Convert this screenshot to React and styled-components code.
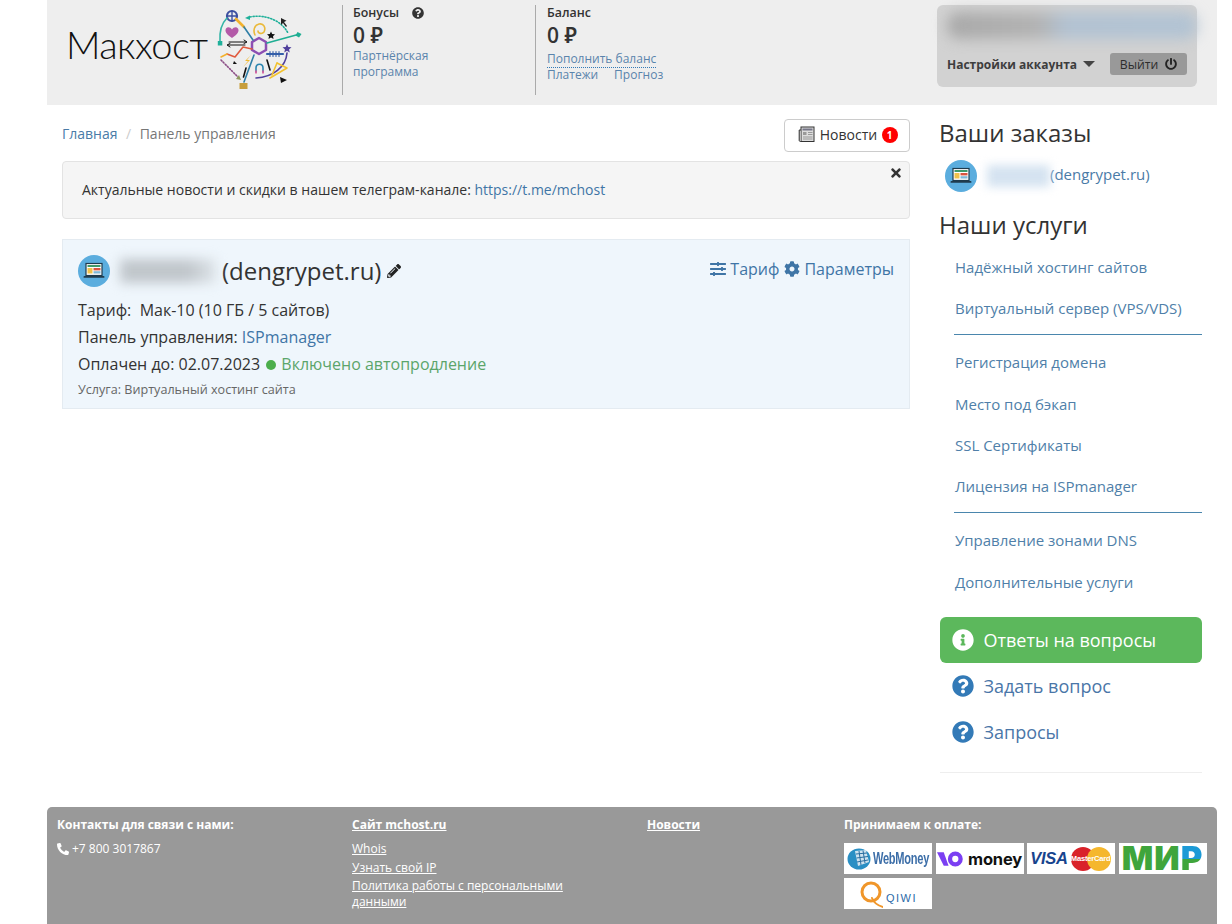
import React from "react";
import styled, { createGlobalStyle } from "styled-components";
import { FaSlidersH, FaCog, FaPencilAlt, FaTimes, FaInfoCircle, FaQuestionCircle, FaPhoneAlt, FaPowerOff } from "react-icons/fa";

const Global = createGlobalStyle`
  html, body { margin: 0; padding: 0; background: #fff; }
  body { font-family: "Open Sans", "Noto Sans", sans-serif; font-size: 14px; color: #333; }
  a { text-decoration: none; color: inherit; }
`;

const Page = styled.div`
  width: 1170px;
  margin-left: 47px;
  height: 924px;
  display: flex;
  flex-direction: column;
  overflow: hidden;
`;

const Header = styled.header`
  height: 105px;
  flex: none;
  background: #eee;
  display: flex;
`;

const LogoBlock = styled.div`
  width: 295px;
  flex: none;
  display: flex;
  align-items: flex-start;
  padding-left: 19px;
  box-sizing: border-box;
`;

const LogoText = styled.div`
  font-family: "Lato", sans-serif;
  font-weight: 300;
  font-size: 38px;
  line-height: 46px;
  margin-top: 21px;
  width: 144px;
  color: #111;
  letter-spacing: -0.6px;
`;

const LogoMark = styled.svg`
  width: 100px;
  height: 90px;
  margin-top: 5px;
  flex: none;
`;

const Stat = styled.div`
  width: ${(p) => p.$w}px;
  flex: none;
  box-sizing: border-box;
  height: 90px;
  margin-top: 5px;
  border-left: 1px solid #aaa;
  padding-left: ${(p) => p.$pad}px;
`;

const StatTitle = styled.div`
  font-size: 12.4px;
  font-weight: 600;
  line-height: 16px;
  color: #333;
  display: flex;
  align-items: center;
  gap: 13px;
`;

const StatValue = styled.div`
  font-size: 21px;
  font-weight: 600;
  line-height: 26px;
  margin-top: 1px;
  color: #333;
`;

const StatLink = styled.a`
  display: block;
  font-size: 12px;
  line-height: 15.5px;
  color: #5a84ac;
  width: ${(p) => p.$w || "auto"};
`;

const DottedLink = styled(StatLink)`
  display: inline-block;
  border-bottom: 1px dotted #337ab7;
  line-height: 14.5px;
  margin-top: 1px;
`;

const StatLinks = styled.div`
  display: flex;
  gap: 16px;
  margin-top: -1px;
`;

const Account = styled.div`
  margin-left: auto;
  margin-right: 20px;
  margin-top: 5px;
  width: 260px;
  height: 82px;
  background: #d2d2d2;
  border-radius: 6px;
  box-sizing: border-box;
  padding: 7px 10px 0;
`;

const BlurBar = styled.div`
  height: 27px;
  width: 250px;
  border-radius: 12px;
  background: linear-gradient(90deg, #a9a9a9 0, #b2b2b2 36%, #b2c2d2 48%, #b2c3d3 100%);
  filter: blur(7px);
`;

const AccountRow = styled.div`
  display: flex;
  align-items: center;
  margin-top: 14px;
`;

const AccountSettings = styled.div`
  font-size: 12px;
  font-weight: 700;
  color: #3d3d3d;
  display: flex;
  align-items: center;
  gap: 6px;
`;

const Caret = styled.span`
  width: 0;
  height: 0;
  border-left: 6px solid transparent;
  border-right: 6px solid transparent;
  border-top: 6px solid #444;
`;

const Logout = styled.a`
  margin-left: auto;
  width: 77px;
  height: 22px;
  background: #999;
  border-radius: 3px;
  font-size: 12.2px;
  color: #2d2d2d;
  display: flex;
  align-items: center;
  justify-content: center;
  gap: 7px;
`;

const Content = styled.div`
  flex: 1;
  display: grid;
  grid-template-columns: 848px 262px;
  column-gap: 30px;
  padding: 0 15px;
  align-content: start;
`;

const Main = styled.main`
  min-width: 0;
`;

const TopRow = styled.div`
  display: flex;
  align-items: center;
  justify-content: space-between;
  height: 33px;
  margin-top: 14px;
`;

const Crumbs = styled.div`
  font-size: 14px;
  color: #777;
  display: flex;
  gap: 8.5px;
  margin-top: -4px;
`;

const CrumbLink = styled.a`
  color: #4a7ba7;
`;

const Sep = styled.span`
  color: #ccc;
`;

const NewsBtn = styled.a`
  width: 126px;
  height: 33px;
  box-sizing: border-box;
  border: 1px solid #ccc;
  border-radius: 4px;
  display: flex;
  align-items: center;
  justify-content: center;
  gap: 4.5px;
  padding: 0 0 2px 2px;
  font-size: 14px;
  color: #333;
  background: #fff;
`;

const Badge = styled.span`
  width: 16px;
  height: 16px;
  border-radius: 50%;
  background: #f00;
  color: #fff;
  font-size: 10px;
  font-weight: 700;
  display: inline-flex;
  align-items: center;
  justify-content: center;
`;

const Notice = styled.div`
  position: relative;
  margin-top: 9px;
  height: 58px;
  box-sizing: border-box;
  background: #f5f5f5;
  border: 1px solid #e3e3e3;
  border-radius: 4px;
  padding: 18px 19px 0;
  line-height: 19px;
  font-size: 14px;
`;

const Close = styled.span`
  position: absolute;
  right: 6px;
  top: 4px;
  color: #333;
  font-size: 14px;
  line-height: 14px;
  display: flex;
`;

const Link = styled.a`
  color: #3f75a6;
`;

const Card = styled.section`
  margin-top: 20px;
  height: 170px;
  box-sizing: border-box;
  background: #eff6fc;
  border: 1px solid #e4ebf1;
  padding: 15px 15px 0;
`;

const CardHead = styled.div`
  display: flex;
  align-items: center;
  height: 32px;
  margin-bottom: 10px;
`;

const SiteBadge = styled.svg`
  width: 32px;
  height: 32px;
  flex: none;
`;

const CardBlur = styled.div`
  width: 96px;
  height: 24px;
  margin-left: 10px;
  background: linear-gradient(90deg, #c0c6cb 0, #c0c6cb 70%, #dde3e8 100%);
  filter: blur(6px);
  flex: none;
`;

const CardTitle = styled.div`
  font-size: 24px;
  line-height: 32px;
  color: #333;
  margin-left: 6px;
`;

const Pencil = styled.span`
  font-size: 14px;
  margin-left: 6px;
  display: flex;
  color: #222;
`;

const CardActions = styled.div`
  margin-left: auto;
  display: flex;
  align-items: center;
  font-size: 16px;
  color: #3f75a6;
  gap: 5px;
  margin-top: -5px;
`;

const ActionLink = styled.a`
  display: flex;
  align-items: center;
  gap: 4px;
`;

const CardLine = styled.div`
  font-size: 16px;
  line-height: 27px;
  color: #333;
`;

const Green = styled.span`
  color: #5ba56a;
`;

const Dot = styled.span`
  display: inline-block;
  width: 10px;
  height: 10px;
  border-radius: 50%;
  background: #4cae4c;
  margin: 0 5px 0 2px;
`;

const CardNote = styled.div`
  font-size: 12.6px;
  line-height: 16px;
  margin-top: 4px;
  color: #666;
`;

const Side = styled.aside`
  min-width: 0;
`;

const SideTitle = styled.h2`
  margin: 0 0 0 -1px;
  font-size: 24px;
  font-weight: 400;
  line-height: 32px;
  color: #333;
  margin-top: ${(p) => p.$top}px;
`;

const OrderRow = styled.div`
  display: flex;
  align-items: center;
  padding-left: 5px;
  height: 32px;
  margin-top: 11px;
`;

const OrderBlur = styled.div`
  width: 63px;
  height: 22px;
  margin-left: 10px;
  background: #d5e3f1;
  filter: blur(5px);
  flex: none;
`;

const OrderName = styled.a`
  font-size: 15px;
  color: #4a7ba7;
  margin-top: -4px;
`;

const Services = styled.nav`
  margin-top: 5px;
`;

const ServiceLink = styled.a`
  display: flex;
  align-items: center;
  height: 41.3px;
  padding-left: 15px;
  font-size: 15px;
  color: #4f7fa9;
`;

const ServiceRule = styled.div`
  height: 1px;
  background: #4a86ad;
  margin: 5px 0 7px 14px;
`;

const Help = styled.a`
  display: flex;
  align-items: center;
  height: 46px;
  box-sizing: border-box;
  padding-left: 12px;
  gap: 9.5px;
  font-size: 18px;
  border-radius: 6px;
  color: ${(p) => (p.$active ? "#fff" : "#4a76a8")};
  background: ${(p) => (p.$active ? "#5cb85c" : "transparent")};
  svg { color: ${(p) => (p.$active ? "#fff" : "#337ab7")}; font-size: 22px; flex: none; }
`;

const HelpList = styled.div`
  margin-top: 15px;
`;

const SideRule = styled.div`
  height: 1px;
  background: #eee;
  margin-top: 17px;
`;

const Footer = styled.footer`
  margin-top: auto;
  height: 117px;
  flex: none;
  background: #999;
  border-radius: 5px 5px 0 0;
  color: #fff;
  display: grid;
  grid-template-columns: 295px 295px 197px 1fr;
  padding: 10px 0 0 10px;
  box-sizing: border-box;
  font-size: 12px;
`;

const FootTitle = styled.div`
  font-weight: 700;
  font-size: 12px;
  line-height: 16px;
  margin-bottom: ${(p) => (p.$wide ? 10 : 8)}px;
  text-decoration: ${(p) => (p.$u ? "underline" : "none")};
`;

const FootText = styled.div`
  display: flex;
  align-items: center;
  gap: 3px;
  line-height: 16px;
  font-size: 12px;
`;

const FootLink = styled.a`
  display: block;
  color: #fff;
  text-decoration: underline;
  line-height: 16px;
  font-size: 12px;
  width: 240px;
  margin-top: ${(p) => (p.$tight ? -1 : 0)}px;
  margin-bottom: 3px;
`;

const Pays = styled.div`
  display: flex;
  flex-wrap: wrap;
  gap: 4px 3.5px;
  width: 370px;
`;

const Pay = styled.div`
  width: 88px;
  height: 31px;
  background: #fff;
  display: flex;
  align-items: center;
  justify-content: center;
  gap: ${(p) => p.$gap || 2}px;
`;

const WmText = styled.span`
  font-family: "Liberation Sans", sans-serif;
  font-weight: 700;
  font-size: 17px;
  color: #3c6ea8;
  letter-spacing: -0.4px;
  transform: scaleX(0.65);
  transform-origin: left center;
  width: 57px;
  white-space: nowrap;
`;

const YooText = styled.span`
  font-family: "Inter", sans-serif;
  font-weight: 700;
  font-size: 16.5px;
  color: #111;
  letter-spacing: -0.2px;
`;

const VisaText = styled.span`
  font-family: "Liberation Sans", sans-serif;
  font-style: italic;
  font-weight: 700;
  font-size: 16.5px;
  color: #17448e;
  letter-spacing: -0.3px;
`;

const McWrap = styled.div`
  position: relative;
  width: 42px;
  height: 24px;
  flex: none;
`;

const McText = styled.span`
  position: absolute;
  left: 0;
  right: 0;
  top: 6px;
  text-align: center;
  font-family: "Liberation Sans", sans-serif;
  font-weight: 700;
  font-size: 7.6px;
  line-height: 12px;
  letter-spacing: -0.2px;
  color: #fff;
  white-space: nowrap;
`;

const MirText = styled.span`
  font-family: "Inter", sans-serif;
  font-weight: 900;
  font-size: 33px;
  line-height: 31px;
  letter-spacing: 1px;
  color: #3fa53c;
  white-space: nowrap;
  span { background: linear-gradient(180deg, #1c9ad6 0 52%, #3fa53c 52%); -webkit-background-clip: text; background-clip: text; -webkit-text-fill-color: transparent; }
`;

const QiwiText = styled.span`
  font-family: "Liberation Sans", sans-serif;
  font-size: 11px;
  letter-spacing: 1.5px;
  color: #2c6aa8;
  margin-top: 8px;
`;

function Site() {
  return (
    <SiteBadge viewBox="0 0 32 32">
      <circle cx="16" cy="16" r="16" fill="#5badde" />
      <rect x="8" y="8.5" width="16" height="12" fill="#fff" stroke="#1f3b4d" strokeWidth="1.2" />
      <rect x="9.5" y="10" width="13" height="2" fill="#3f9a6b" />
      <rect x="9.5" y="13" width="5" height="5.5" fill="#f0c14b" />
      <rect x="15.5" y="13" width="7" height="2.4" fill="#d9543f" />
      <rect x="15.5" y="16.2" width="7" height="2.3" fill="#7fb8d8" />
      <rect x="5.5" y="21" width="21" height="1.8" rx=".9" fill="#1f3b4d" />
    </SiteBadge>
  );
}

function Logo() {
  return (
    <LogoMark viewBox="0 0 100 90" fill="none" strokeLinecap="round" strokeLinejoin="round">
      <path d="M49 33 56 37V45L49 49 42 45V37Z" stroke="#8d4fb3" strokeWidth="2.5" />
      <circle cx="22" cy="11" r="5" stroke="#3c4fa0" strokeWidth="2.2" />
      <path d="M22 6v10M17 11h10" stroke="#3c4fa0" strokeWidth="1.4" />
      <path d="M17 13C11 19 9.500 28 10 36" stroke="#33b4a6" strokeWidth="1.600" />
      <rect x="7.800" y="36" width="4.500" height="4.500" fill="#1fb09a" />
      <path d="M26 14 34 22" stroke="#f3b12d" strokeWidth="2.600" />
      <path d="M34 22 43 35" stroke="#2f7ea6" strokeWidth="1.600" />
      <path d="M45 30C43 26 44 20 49 19 54 18 56 23 54 27 52 29.500 48 28.500 48 26" stroke="#eab93a" strokeWidth="1.600" />
      <path d="M61 26.500 62.200 29 65 29.300 63 31.200 63.500 34 61 32.600 58.500 34 59 31.200 57 29.300 59.800 29Z" fill="#111" />
      <path d="M40 12C55 9 71 15 78 28" stroke="#1fb09a" strokeWidth="1.600" strokeDasharray="1.200 1.800" />
      <path d="M35 13 40 10.500V15Z" fill="#1fb09a" />
      <path d="M71 13 76.500 15.800 74 17 77 21 76 22 73 18 71 20Z" fill="#222" />
      <path d="M57 38 88 29.500" stroke="#1fae93" strokeWidth="1.600" />
      <path d="M87.500 27 91.500 29 89 32.500 85.500 30.500Z" fill="#1fae93" />
      <path d="M77 39 78.300 42 81.500 42.300 79 44.400 79.800 47.500 77 45.800 74.200 47.500 75 44.400 72.500 42.300 75.700 42Z" fill="#503f9c" />
      <path d="M77 48C76 62 63 72 46 73" stroke="#503f9c" strokeWidth="1.600" />
      <path d="M22 33C16 29 14.500 26 16 23.500 17.500 21.500 20.500 22 22 24.500 23.500 22 26.500 21.500 28 23.500 29.500 26 28 29 22 33Z" fill="#b35aa8" />
      <path d="M19 37H36M18 40H35" stroke="#111" strokeWidth="1" />
      <path d="M34 35 37 37 34 38.500M20 38.500 17 40 20 42" stroke="#111" strokeWidth="1" />
      <path d="M42 44 33 42 25 52 17 49" stroke="#e05a3e" strokeWidth="1.600" />
      <path d="M17 49 11 52" stroke="#f3b12d" strokeWidth="1.600" />
      <path d="M11 55 28 72" stroke="#8b4d86" strokeWidth="1.600" strokeDasharray="1.200 1.800" />
      <path d="M29 70 31 75 26 74Z" fill="#8f9a5d" />
      <path d="M24 56 27 59 23 59Z" fill="#111" />
      <path d="M41 50 35 56 38 56 33 62 40 55 37 55Z" fill="#f2b92d" />
      <path d="M36 63 33.500 72" stroke="#111" strokeWidth="1.600" />
      <path d="M44 50 34 77" stroke="#2f7ea6" strokeWidth="1.600" />
      <rect x="29.500" y="78" width="8" height="6" fill="#c79d3b" />
      <path d="M46 67V63C46 58 53 58 53 63V67" stroke="#2d86b0" strokeWidth="1.600" />
      <path d="M46 68v-2M53 68v-2" stroke="#e0559a" strokeWidth="1.600" />
      <path d="M57 55 60 65" stroke="#111" strokeWidth="1.600" />
      <path d="M57 49H73" stroke="#345ea8" strokeWidth="2.200" />
      <path d="M60 46.500V51.500M63 46.500V51.500M66 46.500V51.500M69 46.500V51.500" stroke="#345ea8" strokeWidth="1.100" />
      <path d="M67 58 77 63 60 73" stroke="#f3c22f" strokeWidth="1.600" />
      <path d="M67 58 62 70" stroke="#f3c22f" strokeWidth="1.600" />
      <path d="M70 72 77 75 71 78Z" fill="#111" />
    </LogoMark>
  );
}

function NewsIcon() {
  return (
    <svg width="17" height="17" viewBox="0 0 17 17" fill="none">
      <rect x="3" y="1" width="13" height="14.500" fill="#ddd" stroke="#333" />
      <path d="M3 4H1.200V14.500C1.200 15.300 2 15.500 3 15.500" fill="#bbb" stroke="#333" />
      <rect x="4.500" y="2.500" width="10" height="2" fill="#778" />
      <rect x="5" y="6" width="3.500" height="3" fill="#999" />
      <path d="M10 6.500H14.500M10 8.500H14.500M5 11H14.500M5 13H14.500" stroke="#999" />
    </svg>
  );
}

const services1 = ["Надёжный хостинг сайтов", "Виртуальный сервер (VPS/VDS)"];
const services2 = ["Регистрация домена", "Место под бэкап", "SSL Сертификаты", "Лицензия на ISPmanager"];
const services3 = ["Управление зонами DNS", "Дополнительные услуги"];

export default function App() {
  return (
    <>
      <Global />
      <Page>
        <Header>
          <LogoBlock>
            <LogoText>Макхост</LogoText>
            <Logo />
          </LogoBlock>
          <Stat $w={193} $pad={10}>
            <StatTitle>
              Бонусы
              <FaQuestionCircle size={12} color="#333" />
            </StatTitle>
            <StatValue>0 ₽</StatValue>
            <StatLink $w="90px">Партнёрская программа</StatLink>
          </Stat>
          <Stat $w={150} $pad={11}>
            <StatTitle>Баланс</StatTitle>
            <StatValue>0 ₽</StatValue>
            <DottedLink>Пополнить баланс</DottedLink>
            <StatLinks>
              <StatLink>Платежи</StatLink>
              <StatLink>Прогноз</StatLink>
            </StatLinks>
          </Stat>
          <Account>
            <BlurBar />
            <AccountRow>
              <AccountSettings>
                Настройки аккаунта
                <Caret />
              </AccountSettings>
              <Logout>
                Выйти
                <FaPowerOff size={12} color="#222" />
              </Logout>
            </AccountRow>
          </Account>
        </Header>

        <Content>
          <Main>
            <TopRow>
              <Crumbs>
                <CrumbLink>Главная</CrumbLink>
                <Sep>/</Sep>
                <span>Панель управления</span>
              </Crumbs>
              <NewsBtn>
                <NewsIcon />
                Новости
                <Badge>1</Badge>
              </NewsBtn>
            </TopRow>
            <Notice>
              Актуальные новости и скидки в нашем телеграм-канале: <Link>https://t.me/mchost</Link>
              <Close>
                <FaTimes />
              </Close>
            </Notice>
            <Card>
              <CardHead>
                <Site />
                <CardBlur />
                <CardTitle>(dengrypet.ru)</CardTitle>
                <Pencil>
                  <FaPencilAlt />
                </Pencil>
                <CardActions>
                  <ActionLink>
                    <FaSlidersH />
                    Тариф
                  </ActionLink>
                  <ActionLink>
                    <FaCog />
                    Параметры
                  </ActionLink>
                </CardActions>
              </CardHead>
              <CardLine>Тариф:&nbsp; Мак-10 (10 ГБ / 5 сайтов)</CardLine>
              <CardLine>
                Панель управления: <Link>ISPmanager</Link>
              </CardLine>
              <CardLine>
                Оплачен до: 02.07.2023 <Dot />
                <Green>Включено автопродление</Green>
              </CardLine>
              <CardNote>Услуга: Виртуальный хостинг сайта</CardNote>
            </Card>
          </Main>
          <Side>
            <SideTitle $top={12}>Ваши заказы</SideTitle>
            <OrderRow>
              <Site />
              <OrderBlur />
              <OrderName>(dengrypet.ru)</OrderName>
            </OrderRow>
            <SideTitle $top={17}>Наши услуги</SideTitle>
            <Services>
              {services1.map((s) => (
                <ServiceLink key={s}>{s}</ServiceLink>
              ))}
              <ServiceRule />
              {services2.map((s) => (
                <ServiceLink key={s}>{s}</ServiceLink>
              ))}
              <ServiceRule />
              {services3.map((s) => (
                <ServiceLink key={s}>{s}</ServiceLink>
              ))}
            </Services>
            <HelpList>
              <Help $active>
                <FaInfoCircle />
                Ответы на вопросы
              </Help>
              <Help>
                <FaQuestionCircle />
                Задать вопрос
              </Help>
              <Help>
                <FaQuestionCircle />
                Запросы
              </Help>
            </HelpList>
            <SideRule />
          </Side>
        </Content>

        <Footer>
          <div>
            <FootTitle>Контакты для связи с нами:</FootTitle>
            <FootText>
              <FaPhoneAlt size={12} />
              +7 800 3017867
            </FootText>
          </div>
          <div>
            <FootTitle $u>Сайт mchost.ru</FootTitle>
            <FootLink>Whois</FootLink>
            <FootLink>Узнать свой IP</FootLink>
            <FootLink $tight>Политика работы с персональными данными</FootLink>
          </div>
          <div>
            <FootTitle $u>Новости</FootTitle>
          </div>
          <div>
            <FootTitle $wide>Принимаем к оплате:</FootTitle>
            <Pays>
              <Pay>
                <svg width="24" height="22" viewBox="0 0 24 22">
                  <ellipse cx="12" cy="11" rx="11.500" ry="10.500" fill="#2a8fc4" />
                  <path d="M8 3 19 2 22 14 11 18Z" fill="#cfe3f0" />
                  <path d="M9 6 20 5M9.500 10 21 8.500M10 14 21 12M12 3 14 17M16 2.500 18 15" stroke="#2a6ea0" strokeWidth="1" />
                </svg>
                <WmText>WebMoney</WmText>
              </Pay>
              <Pay $gap={5}>
                <svg width="26" height="16" viewBox="0 0 27 16">
                  <path d="M0 1H7L12 15H7Z" fill="#7b3ff2" />
                  <circle cx="19" cy="8" r="5.500" fill="none" stroke="#7b3ff2" strokeWidth="4.500" />
                </svg>
                <YooText>money</YooText>
              </Pay>
              <Pay $gap={2}>
                <VisaText>VISA</VisaText>
                <McWrap>
                  <svg width="42" height="24" viewBox="0 0 42 24">
                    <circle cx="13" cy="12" r="12" fill="#d9222a" />
                    <circle cx="29" cy="12" r="12" fill="#f5b72d" />
                  </svg>
                  <McText>MasterCard</McText>
                </McWrap>
              </Pay>
              <Pay>
                <MirText>
                  МИ<span>Р</span>
                </MirText>
              </Pay>
              <Pay $gap={3}>
                <svg width="24" height="30" viewBox="0 0 24 30" fill="none">
                  <circle cx="12" cy="13" r="9" stroke="#f0962a" strokeWidth="3" />
                  <path d="M13 19C15 24 20 27 24 28" stroke="#f0962a" strokeWidth="2" strokeLinecap="round" />
                </svg>
                <QiwiText>QIWI</QiwiText>
              </Pay>
            </Pays>
          </div>
        </Footer>
      </Page>
    </>
  );
}
